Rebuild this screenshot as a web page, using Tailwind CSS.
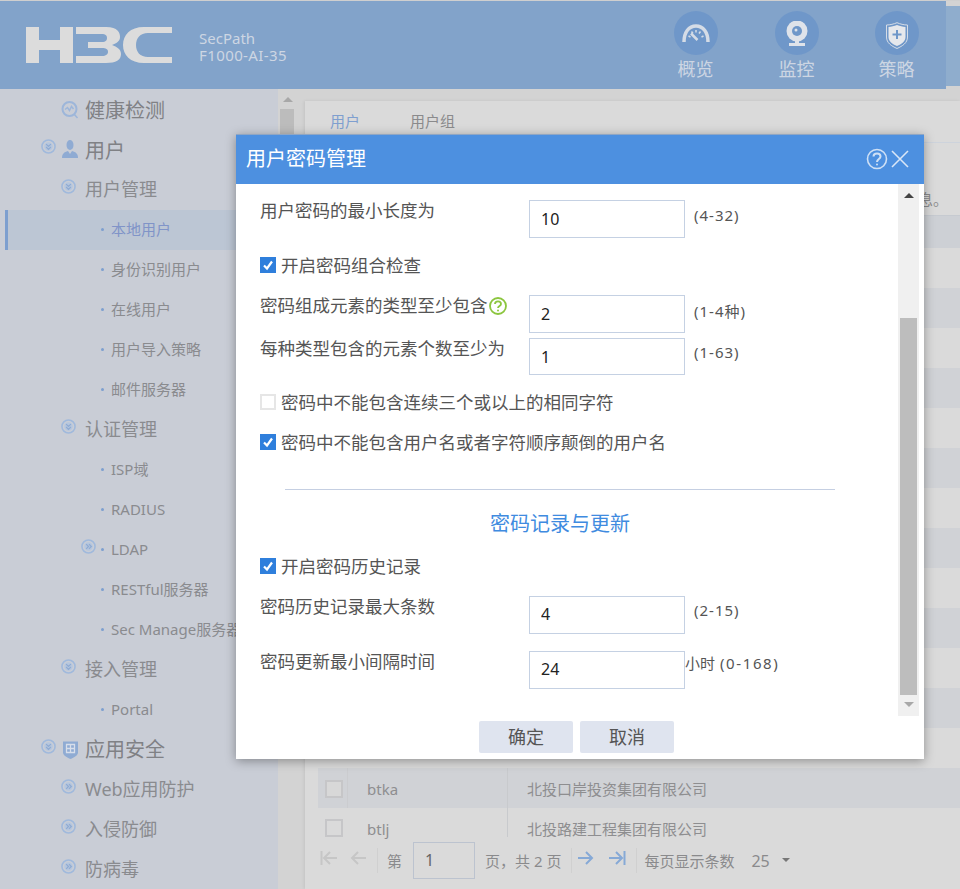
<!DOCTYPE html>
<html lang="en">
<head>
    <meta charset="UTF-8">
    <title>用户密码管理</title>
    <script src="https://cdn.jsdelivr.net/npm/@tailwindcss/browser@4"></script>
</head>
<body class="[font-family:'Noto_Sans','Noto_Sans_CJK_SC',sans-serif]">
    <svg class="hidden">
        <symbol id="chev-down" viewBox="0 0 16 16">
            <circle cx="8" cy="8" r="7" fill="none" stroke="#a0b9dc" stroke-width="1.700"/>
            <circle cx="8" cy="8" r="4.5" fill="#b5c6de"/>
            <path d="M5.5 5.5 8 8l2.5-2.5M5.5 8.500 8 11l2.5-2.5" fill="none" stroke="#8fabd3" stroke-width="1.3"/>
        </symbol>
        <symbol id="chev-right" viewBox="0 0 16 16">
            <circle cx="8" cy="8" r="7" fill="none" stroke="#a0b9dc" stroke-width="1.700"/>
            <circle cx="8" cy="8" r="4.5" fill="#b5c6de"/>
            <path d="M5.5 5.5 8 8l-2.5 2.5M8.500 5.5 11 8l-2.5 2.5" fill="none" stroke="#8fabd3" stroke-width="1.3"/>
        </symbol>
        <symbol id="check" viewBox="0 0 16 16">
            <rect width="16" height="16" fill="#2f7fdc"/>
            <path d="M4 8.500 7 11.500 12 4.500" fill="none" stroke="#fff" stroke-width="2.2"/>
        </symbol>
    </svg>

    <div class="relative h-[889px] w-[960px] overflow-hidden bg-[#d3d3d3]">
        <!-- Header -->
        <div class="h-px bg-[#cfcfcf]"></div>
        <div class="relative flex h-[88px] w-[946px] bg-[#82a3ca]">
            <svg class="ml-[26px] mt-[26px] h-[36px] w-[146px]" viewBox="0 0 146 36" fill="#dcdcdc">
                <path d="M0 0H13V13H34V0H47V36H34V23H13V36H0Z"/>
                <path d="M50 0H80C92 0 94 6 94 10 94 14 91 16 86 18 91 20 95 22 95 27 95 33 90 36 80 36H50V29H76C80 29 82 27 82 25 82 22 80 21 76 21H62V15H76C80 15 81 13 81 11 81 8 79 7 76 7H50Z"/>
                <path d="M146 0H118C104 0 97 8 97 18 97 28 104 36 118 36H146V30H122C114 30 110 25 110 18 110 11 114 6 122 6H146Z"/>
            </svg>
            <div class="ml-[27px] mt-[29px] flex flex-col gap-[1px] text-[15px] leading-[16px] text-[#cdd6e3]">
                <p>SecPath</p>
                <p class="tracking-[0.4px]">F1000-AI-35</p>
            </div>
            <div class="absolute left-[652px] top-[10px] flex w-[87px] flex-col items-center">
                <div class="flex h-[44px] w-[44px] items-center justify-center rounded-full bg-[#6f97c9]">
                    <svg class="h-[18px] w-[28px]" viewBox="0 0 28 18" fill="none" stroke="#d5dce6">
                        <path d="M2 18C2 8 7 2 14 2s12 6 12 16" stroke-width="3.500"/>
                        <path d="M6.500 12l2 1M9.500 7.500l1.500 2M14 6v2.500M18.500 7.500 17 9.500M21.500 12l-2 1" stroke-width="1.500"/>
                        <path d="M9 9.500 15.500 16" stroke-width="2.500"/>
                    </svg>
                </div>
                <span class="mt-[2px] text-[18px] leading-[24px] text-[#cdd6e3]">概览</span>
            </div>
            <div class="absolute left-[753px] top-[10px] flex w-[87px] flex-col items-center">
                <div class="flex h-[44px] w-[44px] items-center justify-center rounded-full bg-[#6f97c9]">
                    <svg class="h-[25px] w-[22px]" viewBox="0 0 22 25">
                        <circle cx="11" cy="10" r="10.500" fill="#dfe3ea"/>
                        <circle cx="11" cy="10" r="5" fill="#6f97c9"/>
                        <circle cx="10" cy="9" r="1.500" fill="#dfe3ea"/>
                        <path d="M9 20h4v2h6v3H3v-3h6z" fill="#dfe3ea"/>
                    </svg>
                </div>
                <span class="mt-[2px] text-[18px] leading-[24px] text-[#cdd6e3]">监控</span>
            </div>
            <div class="absolute left-[853px] top-[10px] flex w-[87px] flex-col items-center">
                <div class="flex h-[44px] w-[44px] items-center justify-center rounded-full bg-[#6f97c9]">
                    <svg class="h-[27px] w-[22px] translate-y-[2px]" viewBox="0 0 22 27">
                        <path d="M11 .7C14 2 18 3 21.500 3v12c0 6-5 9-10.500 11.500C5.500 24 .5 21 .5 15V3C4 3 8 2 11 .7z" fill="none" stroke="#d5dce6"/>
                        <path d="M11 3c3 1 5.500 1.800 8.500 2v10c0 4.500-4 7-8.500 9-4.500-2-8.500-4.500-8.500-9V5c3-.2 5.500-1 8.500-2z" fill="#e6e8ec"/>
                        <path d="M11 8v9M6.500 12.500h9" stroke="#6f97c9" stroke-width="2" fill="none"/>
                    </svg>
                </div>
                <span class="mt-[2px] text-[18px] leading-[24px] text-[#cdd6e3]">策略</span>
            </div>
        </div>
        <div class="absolute right-0 top-[6px] h-[80px] w-[14px] bg-[#8fadcd]"></div>
        <div class="absolute right-0 top-[86px] h-[3px] w-[14px] bg-[#d3d3d3]"></div>

        <div class="flex h-[800px]">
            <!-- Sidebar -->
            <div class="w-[278px] shrink-0 overflow-hidden whitespace-nowrap bg-[#c9cdd6] pt-px text-[#8a8b8f]">
                <div class="flex h-10 items-center pl-[61px] pt-[2px] text-[20px] text-[#808185]">
                    <svg class="mr-[6px] h-[18px] w-[18px] -translate-y-[1px]" viewBox="0 0 18 18" fill="none" stroke="#9db6da" stroke-width="2">
                        <circle cx="8.500" cy="8" r="7"/><path d="M4 8.500l2.500-2 2 3 2-4 2 2.500M13 13l3.500 4" stroke-width="1.500"/>
                    </svg>健康检测
                </div>
                <div class="flex h-10 items-center pl-[41px] pt-[2px] text-[20px] text-[#808185]">
                    <svg class="mr-[6px] h-[15px] w-[15px] -translate-y-[5px]"><use href="#chev-down"/></svg>
                    <svg class="mr-[7px] h-[18px] w-[16px] -translate-y-[2px]" viewBox="0 0 16 18" fill="#8fabd3"><ellipse cx="8" cy="5" rx="3.500" ry="5"/><path d="M0 18c0-4 2-6 6-7l2 3 2-3c4 1 6 3 6 7z"/></svg>用户
                </div>
                <div class="flex h-10 items-center pb-[2px] pl-[61px] text-[18px]">
                    <svg class="mr-[9px] h-[15px] w-[15px] -translate-y-[3px]"><use href="#chev-down"/></svg>用户管理
                </div>
                <div class="ml-[5px] flex h-10 items-center border-l-[3px] border-[#7d9fcf] bg-[#bcc6d4] pb-[2px] pl-[93px] text-[15px] text-[#8094c8]">
                    <span class="mr-[7px] h-[3px] w-[3px] rounded-full bg-[#7d9fcf]"></span>本地用户
                </div>
                <div class="flex h-10 items-center pb-[2px] pl-[101px] text-[15px]"><span class="mr-[7px] h-[3px] w-[3px] rounded-full bg-[#7d9fcf]"></span>身份识别用户</div>
                <div class="flex h-10 items-center pb-[2px] pl-[101px] text-[15px]"><span class="mr-[7px] h-[3px] w-[3px] rounded-full bg-[#7d9fcf]"></span>在线用户</div>
                <div class="flex h-10 items-center pb-[2px] pl-[101px] text-[15px]"><span class="mr-[7px] h-[3px] w-[3px] rounded-full bg-[#7d9fcf]"></span>用户导入策略</div>
                <div class="flex h-10 items-center pb-[2px] pl-[101px] text-[15px]"><span class="mr-[7px] h-[3px] w-[3px] rounded-full bg-[#7d9fcf]"></span>邮件服务器</div>
                <div class="flex h-10 items-center pb-[2px] pl-[61px] text-[18px]">
                    <svg class="mr-[9px] h-[15px] w-[15px] -translate-y-[3px]"><use href="#chev-down"/></svg>认证管理
                </div>
                <div class="flex h-10 items-center pb-[2px] pl-[101px] text-[15px]"><span class="mr-[7px] h-[3px] w-[3px] rounded-full bg-[#7d9fcf]"></span>ISP域</div>
                <div class="flex h-10 items-center pb-[2px] pl-[101px] text-[15px]"><span class="mr-[7px] h-[3px] w-[3px] rounded-full bg-[#7d9fcf]"></span>RADIUS</div>
                <div class="flex h-10 items-center pb-[2px] pl-[81px] text-[15px]">
                    <svg class="mr-[5px] h-[15px] w-[15px] -translate-y-[3px]"><use href="#chev-right"/></svg><span class="mr-[7px] h-[3px] w-[3px] rounded-full bg-[#7d9fcf]"></span>LDAP
                </div>
                <div class="flex h-10 items-center pb-[2px] pl-[101px] text-[15px]"><span class="mr-[7px] h-[3px] w-[3px] rounded-full bg-[#7d9fcf]"></span>RESTful服务器</div>
                <div class="flex h-10 items-center pb-[2px] pl-[101px] text-[15px]"><span class="mr-[7px] h-[3px] w-[3px] rounded-full bg-[#7d9fcf]"></span>Sec Manage服务器</div>
                <div class="flex h-10 items-center pb-[2px] pl-[61px] text-[18px]">
                    <svg class="mr-[9px] h-[15px] w-[15px] -translate-y-[3px]"><use href="#chev-down"/></svg>接入管理
                </div>
                <div class="flex h-10 items-center pb-[2px] pl-[101px] text-[15px]"><span class="mr-[7px] h-[3px] w-[3px] rounded-full bg-[#7d9fcf]"></span>Portal</div>
                <div class="flex h-10 items-center pl-[41px] text-[20px] text-[#808185]">
                    <svg class="mr-[7px] h-[15px] w-[15px] -translate-y-[4px]"><use href="#chev-down"/></svg>
                    <svg class="mr-[7px] h-[19px] w-[15px] -translate-y-[1px]" viewBox="0 0 15 19"><path d="M0 1.500h15v11c0 3-4 5-7.500 6.500C4 17.500 0 15.500 0 12.500z" fill="#8fabd3"/><path d="M3.500 4.500h8v8h-8zM7.500 4.500v8M3.500 8.500h8" fill="none" stroke="#d7deea" stroke-width="1.300"/></svg>应用安全
                </div>
                <div class="flex h-10 items-center pb-[2px] pl-[61px] text-[18px]">
                    <svg class="mr-[9px] h-[15px] w-[15px] -translate-y-[3px]"><use href="#chev-right"/></svg>Web应用防护
                </div>
                <div class="flex h-10 items-center pb-[2px] pl-[61px] text-[18px]">
                    <svg class="mr-[9px] h-[15px] w-[15px] -translate-y-[3px]"><use href="#chev-right"/></svg>入侵防御
                </div>
                <div class="flex h-10 items-center pb-[2px] pl-[61px] text-[18px]">
                    <svg class="mr-[9px] h-[15px] w-[15px] -translate-y-[3px]"><use href="#chev-right"/></svg>防病毒
                </div>
            </div>

            <!-- Sidebar scrollbar -->
            <div class="w-[27px] shrink-0 pl-[2px] pt-[8px]">
                <div class="ml-[3px] h-0 w-0 border-x-[5px] border-b-[5px] border-x-transparent border-b-[#a8a8a8]"></div>
                <div class="mt-[7px] h-[100px] w-[14px] bg-[#bcbcbc]"></div>
            </div>

            <!-- Content -->
            <div class="mt-[12px] flex-1 bg-[#dadada] shadow-[-1px_0_3px_rgba(0,0,0,0.08)]">
                <div class="flex h-[42px] items-center border-b border-[#cdd3dc] pl-[25px] text-[15px] text-[#8a8a8c]">
                    <span class="mr-[50px] text-[#7f9fcf]">用户</span><span>用户组</span>
                </div>
                <div class="flex h-[72px] items-end justify-end pb-[5px] pr-[12px] text-[15px] text-[#8a8a8c]">息。</div>
                <div class="ml-[13px] text-[15px] text-[#8e8e90]">
                    <div class="h-[33px] border-t border-[#c6cad0] bg-[#cdd0d5]"></div>
                    <div class="h-10"></div><div class="h-10 bg-[#d0d2d6]"></div>
                    <div class="h-10"></div><div class="h-10 bg-[#d0d2d6]"></div>
                    <div class="h-10"></div><div class="h-10 bg-[#d0d2d6]"></div>
                    <div class="h-10"></div><div class="h-10 bg-[#d0d2d6]"></div>
                    <div class="h-10"></div><div class="h-10 bg-[#d0d2d6]"></div>
                    <div class="h-10"></div><div class="h-10 bg-[#d0d2d6]"></div>
                    <div class="h-10"></div>
                    <div class="flex h-10 items-center bg-[#d0d2d6]">
                        <div class="flex h-full w-[30px] items-center justify-center border-r border-[#cbcccf] pl-[2px] pt-[2px]"><span class="h-[18px] w-[18px] border-2 border-[#c6c6c8] bg-[#d8d8d8]"></span></div>
                        <div class="flex h-full w-[160px] items-center border-r border-[#c8cacd] pl-[19px] pt-[2px]">btka</div>
                        <div class="pl-[19px] pt-[2px]">北投口岸投资集团有限公司</div>
                    </div>
                    <div class="flex h-[29px] items-start">
                        <div class="w-[30px] pl-[7px] pt-[11px]"><div class="h-[18px] w-[18px] border-2 border-[#c6c6c8]"></div></div>
                        <div class="h-[29px] w-[160px] border-r border-[#c8cacd] pl-[19px] pt-[11px] leading-[20px]">btlj</div>
                        <div class="pl-[19px] pt-[11px] leading-[20px]">北投路建工程集团有限公司</div>
                    </div>
                </div>
                <!-- Pagination -->
                <div class="flex h-[40px] items-center pl-[15px] pt-[6px] text-[15px] text-[#8a8a8c]">
                    <svg class="mr-[12px] h-[14px] w-[18px] -translate-y-[2px]" viewBox="0 0 18 14" fill="none" stroke="#c6c6c6" stroke-width="2"><path d="M1.500 0v14M17 7H4M10 1 4 7l6 6"/></svg>
                    <svg class="mr-[11px] h-[14px] w-[16px] -translate-y-[2px]" viewBox="0 0 16 14" fill="none" stroke="#c6c6c6" stroke-width="2"><path d="M16 7H2M8 1 2 7l6 6"/></svg>
                    <span class="mr-[9px] h-[25px] border-l border-[#d0d0d0]"></span>
                    <span class="mr-[11px] translate-y-px">第</span>
                    <span class="mr-[10px] flex h-[37px] w-[62px] items-center border border-[#bcc3cf] pl-[11px] text-[16px] text-[#666]">1</span>
                    <span class="mr-[10px] translate-y-px">页，共 2 页</span>
                    <span class="mr-[6px] h-[25px] border-l border-[#d0d0d0]"></span>
                    <svg class="mr-[14px] h-[14px] w-[16px] -translate-y-[2px]" viewBox="0 0 16 14" fill="none" stroke="#86a9d6" stroke-width="2"><path d="M0 7h14M8 1l6 6-6 6"/></svg>
                    <svg class="mr-[10px] h-[14px] w-[18px] -translate-y-[2px]" viewBox="0 0 18 14" fill="none" stroke="#86a9d6" stroke-width="2"><path d="M16.500 0v14M1 7h13M8 1l6 6-6 6"/></svg>
                    <span class="mr-[7px] h-[25px] border-l border-[#d0d0d0]"></span>
                    <span class="mr-[17px] translate-y-px">每页显示条数</span>
                    <span class="mr-[12px] translate-y-px text-[16px]">25</span>
                    <span class="h-0 w-0 border-x-[4px] border-t-[4px] border-x-transparent border-t-[#777]"></span>
                </div>
            </div>
        </div>

        <!-- Modal -->
        <div class="absolute left-[236px] top-[134px] flex h-[625px] w-[688px] flex-col border-t border-[#8fa6c4] bg-white text-[#555] shadow-[0_2px_10px_rgba(0,0,0,0.35)]">
            <div class="flex h-[49px] shrink-0 items-center bg-[#4d90e0] pb-[2px] pl-[10px] text-[20px] text-white">
                <span class="flex-1">用户密码管理</span>
                <svg class="mr-px h-[22px] w-[22px]" viewBox="0 0 22 22" fill="none" stroke="#cfe0f5" stroke-width="1.600">
                    <circle cx="11" cy="11" r="9.500"/>
                    <path d="M7.500 8.500C7.500 4.500 14.500 4.500 14.500 8.500 14.500 11 11 11 11 14" stroke-width="2"/>
                    <circle cx="11" cy="16.500" r="1" fill="#cfe0f5" stroke="none"/>
                </svg>
                <svg class="ml-[2px] mr-[15px] h-[18px] w-[18px]" viewBox="0 0 18 18" fill="none" stroke="#d9e6f7" stroke-width="1.600"><path d="M1 1l16 16M17 1 1 17"/></svg>
            </div>
            <div class="flex h-[532px] shrink-0">
                <div class="flex-1 pl-[24px]">
                    <div class="mt-[16px] flex h-[38px]">
                        <span class="-mt-px w-[269px] text-[17.500px] leading-[22px]">用户密码的最小长度为</span>
                        <input class="h-[38px] w-[156px] border border-[#c5d1e3] pl-[11px] text-[16px] text-[#222]" value="10">
                        <span class="ml-[9px] mt-[5px] text-[15px] leading-[20px] tracking-[1px]">(4-32)</span>
                    </div>
                    <div class="mt-[16px] flex h-[24px] items-center pb-[2px] text-[17.500px]">
                        <svg class="mr-[5px] h-4 w-4"><use href="#check"/></svg>开启密码组合检查
                    </div>
                    <div class="mt-[17px] flex h-[38px]">
                        <span class="-mt-px flex w-[269px] text-[17.500px] leading-[22px]">密码组成元素的类型至少包含
                            <svg class="ml-px mt-[3px] h-[18px] w-[18px]" viewBox="0 0 18 18" fill="none" stroke="#8cc63f" stroke-width="1.800">
                                <circle cx="9" cy="9" r="8"/>
                                <path d="M6 7c0-3.500 6-3.500 6 0 0 2-3 2-3 4" stroke-width="1.800"/>
                                <circle cx="9" cy="13.500" r="1" fill="#8cc63f" stroke="none"/>
                            </svg>
                        </span>
                        <input class="h-[38px] w-[156px] border border-[#c5d1e3] pl-[11px] text-[16px] text-[#222]" value="2">
                        <span class="ml-[9px] mt-[6px] text-[15px] leading-[20px] tracking-[1px]">(1-4种)</span>
                    </div>
                    <div class="mt-[5px] flex h-[37px]">
                        <span class="-mt-px w-[269px] text-[17.500px] leading-[22px]">每种类型包含的元素个数至少为</span>
                        <input class="h-[37px] w-[156px] border border-[#c5d1e3] pl-[11px] text-[16px] text-[#222]" value="1">
                        <span class="ml-[9px] mt-[4px] text-[15px] leading-[20px] tracking-[1px]">(1-63)</span>
                    </div>
                    <div class="mt-[16px] flex h-[24px] items-center pb-[2px] text-[17.500px]">
                        <span class="mr-[5px] h-4 w-4 border-2 border-[#e6e6e6]"></span>密码中不能包含连续三个或以上的相同字符
                    </div>
                    <div class="mt-[16px] flex h-[24px] items-center pb-[2px] text-[17.500px]">
                        <svg class="mr-[5px] h-4 w-4"><use href="#check"/></svg>密码中不能包含用户名或者字符顺序颠倒的用户名
                    </div>
                    <div class="ml-[25px] mt-[34px] w-[550px] border-t border-[#c5cfe2] pt-[20px] text-center text-[20px] leading-[28px] text-[#3f8be0]">密码记录与更新</div>
                    <div class="mt-[17px] flex h-[24px] items-center pb-[2px] text-[17.500px]">
                        <svg class="mr-[5px] h-4 w-4"><use href="#check"/></svg>开启密码历史记录
                    </div>
                    <div class="mt-[17px] flex h-[38px]">
                        <span class="-mt-px w-[269px] text-[17.500px] leading-[22px]">密码历史记录最大条数</span>
                        <input class="h-[38px] w-[156px] border border-[#c5d1e3] pb-[2px] pl-[11px] text-[16px] text-[#222]" value="4">
                        <span class="ml-[9px] mt-[4px] text-[15px] leading-[20px] tracking-[1px]">(2-15)</span>
                    </div>
                    <div class="mt-[17px] flex h-[38px]">
                        <span class="-mt-px w-[269px] text-[17.500px] leading-[22px]">密码更新最小间隔时间</span>
                        <input class="h-[38px] w-[156px] border border-[#c5d1e3] pb-[2px] pl-[11px] text-[16px] text-[#222]" value="24">
                        <span class="mt-[2px] text-[15px] leading-[20px]">小时<span class="ml-[5px] tracking-[1.600px]">(0-168)</span></span>
                    </div>
                </div>
                <!-- Dialog scrollbar -->
                <div class="mr-[5px] flex w-[21px] flex-col items-center bg-[#f0f0f0] pt-[9px]">
                    <div class="h-0 w-0 border-x-[5px] border-b-[5px] border-x-transparent border-b-[#444]"></div>
                    <div class="mt-[120px] h-[377px] w-[17px] bg-[#bdbdbd]"></div>
                    <div class="mt-[7px] h-0 w-0 border-x-[5px] border-t-[5px] border-x-transparent border-t-[#a8a8a8]"></div>
                </div>
            </div>
            <div class="flex pl-[243px] pt-[5px]">
                <button class="h-[32px] w-[94px] rounded-[2px] bg-[#dfe4ef] text-[18px] text-[#555]">确定</button>
                <button class="ml-[7px] h-[32px] w-[94px] rounded-[2px] bg-[#dfe4ef] text-[18px] text-[#555]">取消</button>
            </div>
        </div>
    </div>
</body>
</html>
